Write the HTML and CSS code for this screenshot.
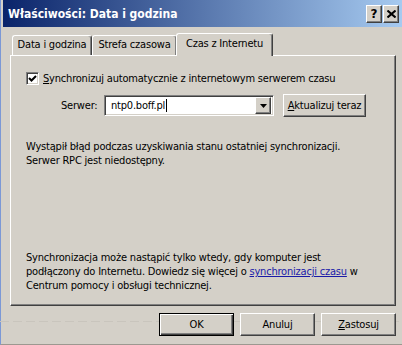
FILE: index.html
```html
<!DOCTYPE html>
<html lang="pl">
<head>
  <meta charset="UTF-8" />
  <title>Właściwości: Data i godzina</title>
  <link rel="stylesheet" href="styles.css">
</head>
<body>
  <div class="window">
    <div class="titlebar">
      <span class="title">Właściwości: Data i godzina</span>
      <div class="caption-btns">
        <span class="cap-btn help">?</span>
        <span class="cap-btn close">
          <svg width="9" height="8" viewBox="0 0 9 8"><path d="M0.5 0.5 L8.5 7.5 M8.5 0.5 L0.5 7.5" stroke="#000" stroke-width="2" fill="none"/></svg>
        </span>
      </div>
    </div>

    <div class="content">
      <div class="tabs">
        <div class="tab tab-date">Data i godzina</div>
        <div class="tab tab-zone">Strefa czasowa</div>
        <div class="tab tab-inet active">Czas z Internetu</div>
      </div>

      <div class="panel">
        <div class="check-row">
          <span class="checkbox">
            <svg width="9" height="9" viewBox="0 0 9 9"><path d="M1 4 L3.5 6.5 L8 2" stroke="#000" stroke-width="2" fill="none"/></svg>
          </span>
          <span><u>S</u>ynchronizuj automatycznie z internetowym serwerem czasu</span>
        </div>

        <div class="server-row">
          <span class="server-label">Serwer:</span>
          <div class="combo">
            <span class="combo-text">ntp0.boff.pl<span class="caret"></span></span>
            <span class="combo-arrow">
              <svg width="7" height="4" viewBox="0 0 7 4"><path d="M0 0 H7 L3.5 4 Z" fill="#000"/></svg>
            </span>
          </div>
          <span class="btn btn-update"><u>A</u>ktualizuj teraz</span>
        </div>

        <p class="status">Wystąpił błąd podczas uzyskiwania stanu ostatniej synchronizacji.<br>Serwer RPC jest niedostępny.</p>

        <p class="note">Synchronizacja może nastąpić tylko wtedy, gdy komputer jest<br>podłączony do Internetu. Dowiedz się więcej o <a href="#">synchronizacji czasu</a> w<br>Centrum pomocy i obsługi technicznej.</p>
      </div>

      <div class="footer">
        <span class="btn btn-default">OK</span>
        <span class="btn">Anuluj</span>
        <span class="btn"><u>Z</u>astosuj</span>
      </div>
    </div>
  </div>
</body>
</html>
```

FILE: styles.css
```css
* {
  box-sizing: border-box;
  margin: 0;
  padding: 0;
}

html, body {
  width: 402px;
  height: 345px;
  overflow: hidden;
}

body {
  font-family: "DejaVu Sans Condensed", "DejaVu Sans", sans-serif;
  font-size: 11px;
  letter-spacing: -0.2px;
  color: #000;
  background: #d4d0c8;
}

.window {
  height: 345px;
  border-left: 1px solid #7b98d6;
  border-bottom: 1px solid #9c9890;
  display: flex;
  flex-direction: column;
}

/* title bar */
.titlebar {
  height: 27px;
  margin-left: 2px;
  padding-left: 5px;
  display: flex;
  align-items: center;
  justify-content: space-between;
  background: linear-gradient(to right, #0a246a, #a6caf0);
}

.title {
  color: #fff;
  font-weight: 700;
  font-size: 12px;
  letter-spacing: 0;
}

.caption-btns {
  display: flex;
  gap: 1px;
  padding-right: 3px;
}

.cap-btn {
  width: 16px;
  height: 18px;
  display: flex;
  align-items: center;
  justify-content: center;
  background: #d4d0c8;
  border: 1px solid;
  border-color: #fff #404040 #404040 #fff;
  box-shadow: inset -1px -1px #808080;
  font-family: "DejaVu Sans", sans-serif;
  font-weight: 700;
  font-size: 12px;
}

/* tabs + panel */
.content {
  padding: 6px 6px 0 9px;
  flex: 1;
  display: flex;
  flex-direction: column;
}

.tabs {
  height: 22px;
  padding-left: 2px;
  display: flex;
  align-items: flex-end;
}

.tab {
  height: 20px;
  text-align: center;
  line-height: 18px;
  background: #d4d0c8;
  border-top: 1px solid #fff;
  border-left: 1px solid #fff;
  border-right: 1px solid #404040;
  box-shadow: inset -1px 0 #808080;
  border-radius: 3px 3px 0 0;
}

.tab-date { width: 80px; }
.tab-zone { width: 85px; }

.tab-inet {
  width: 97px;
  margin-left: -1px;
}

.tab.active {
  height: 23px;
  margin-bottom: -1px;
  line-height: 19px;
  position: relative;
  z-index: 1;
}

.panel {
  height: 251px;
  padding: 16px 14px 12px 15px;
  display: flex;
  flex-direction: column;
  border-top: 1px solid #fff;
  border-left: 1px solid #fff;
  border-right: 1px solid #404040;
  border-bottom: 1px solid #404040;
  box-shadow: inset -1px -1px #808080;
}

.check-row {
  display: flex;
  align-items: center;
  gap: 4px;
}

.checkbox {
  width: 13px;
  height: 13px;
  display: flex;
  align-items: center;
  justify-content: center;
  background: #fff;
  border: 1px solid;
  border-color: #808080 #fff #fff #808080;
  box-shadow: inset 1px 1px #404040, inset -1px -1px #d4d0c8;
}

.server-row {
  margin-top: 9px;
  padding-left: 35px;
  display: flex;
  align-items: center;
}

.server-label {
  width: 43px;
}

.combo {
  width: 170px;
  height: 21px;
  display: flex;
  align-items: center;
  justify-content: space-between;
  background: #fff;
  border: 1px solid;
  border-color: #808080 #fff #fff #808080;
  box-shadow: inset 1px 1px #404040, inset -1px -1px #d4d0c8;
  padding: 2px;
}

.combo-text {
  padding-left: 4px;
  display: flex;
  align-items: center;
}

.caret {
  width: 1px;
  height: 13px;
  background: #000;
  margin-left: 1px;
}

.combo-arrow {
  width: 16px;
  height: 17px;
  display: flex;
  align-items: center;
  justify-content: center;
  background: #d4d0c8;
  border: 1px solid;
  border-color: #fff #404040 #404040 #fff;
  box-shadow: inset -1px -1px #808080;
}

.btn {
  width: 75px;
  height: 23px;
  display: flex;
  align-items: center;
  justify-content: center;
  background: #d4d0c8;
  border: 1px solid;
  border-color: #fff #404040 #404040 #fff;
  box-shadow: inset -1px -1px #808080;
}

.btn-update {
  width: 83px;
  margin-left: 9px;
}

.btn-default {
  border-color: #000;
  box-shadow: inset 1px 1px #fff, inset -1px -1px #404040, inset -2px -2px #808080;
}

.status {
  margin-top: 23px;
  line-height: 14px;
}

.note {
  margin-top: auto;
  line-height: 14px;
}

.note a {
  color: #1a1aa8;
}

/* bottom buttons */
.footer {
  flex: 1;
  padding-top: 7px;
  display: flex;
  justify-content: flex-end;
  align-items: flex-start;
  gap: 6px;
  margin-left: -10px;
  margin-right: -6px;
  padding-right: 6px;
  background: repeating-linear-gradient(to right, #c9c5bd 0 9px, transparent 9px 13px) 0 15px / 100% 1px no-repeat;
}
```
